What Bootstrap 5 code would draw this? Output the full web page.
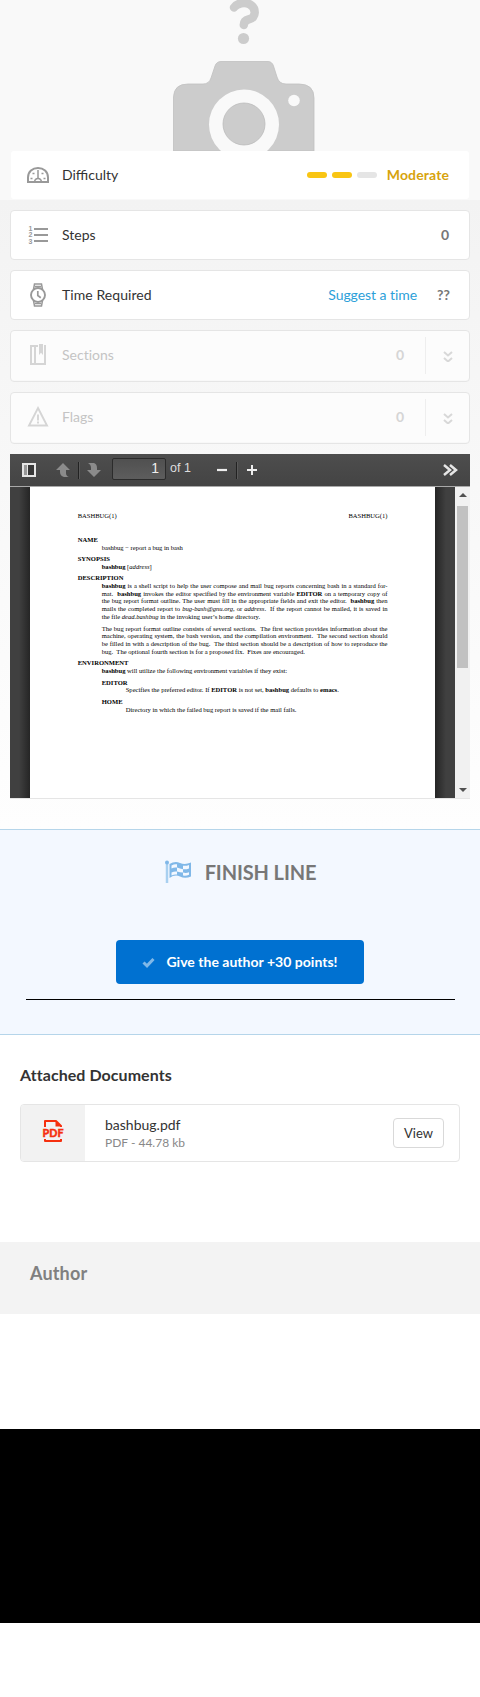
<!DOCTYPE html>
<html lang="en">
<head>
<meta charset="utf-8">
<meta name="viewport" content="width=device-width, initial-scale=1">
<title>Bashbug guide</title>
<link href="https://cdn.jsdelivr.net/npm/bootstrap@5.3.0/dist/css/bootstrap.min.css" rel="stylesheet">
<style>
body{font-family:Lato,"Liberation Sans",sans-serif;font-size:14px;line-height:20px;color:#333;background:#fff}
svg{display:block;flex:none}
.hero{height:200px;background:#f9f9f9;padding:0 11px}
.hero-art{height:151px}
.level-box{height:48px;background:#fff;border-radius:3px;padding:0 20px 0 15px}
.pill{width:20px;height:6px;border-radius:3px;background:#e5e5e5}
.pill.on{background:#f9c513}
.level{color:#d7a30d;letter-spacing:.12px}
.overview{height:629px;background:linear-gradient(#f3f3f3,#fefefe);padding:10px 10px 0}
.info-box{height:50px;border:1px solid #e5e5e5;border-radius:4px;background:#fff;padding:0 20px 0 15px;margin-bottom:10px;font-variant-ligatures:none}
.info-box.off{height:52px;background:#fcfcfc;padding:0 14px 2px 15px;color:#c4c4c4;box-shadow:inset 0 -1px 0 #f8f8f8}
.ic{width:24px;height:24px;margin-right:12px;color:#999}
.off .ic,.off .num{color:#d5d5d5}
.num{color:#777;font-weight:700}
.split{width:1px;height:37px;background:#eee;margin:0 15px 0 21px}
.suggest{color:#2b9fd9;letter-spacing:-.05px}
.viewer{height:345px;border-bottom:1px solid #e5e5e5}
.toolbar-dark{height:32px;background:linear-gradient(#4d4d4d,#444);padding:0 12px;font:14px/20px "Liberation Sans",sans-serif;color:#ddd}
.bar{width:1px;height:17px;background:#222;box-shadow:1px 0 0 #5a5a5a}
.pagebox{width:54px;height:22px;border:1px solid #2b2b2b;border-radius:2px;background:linear-gradient(#505050,#5d5d5d);text-align:right;padding-right:6px;color:#eee;line-height:19px;margin-bottom:2px}
.stage{height:312px;background:#3d3d3d;border-top:1px solid #a9a9a9}
.edge-l{width:20px;background:linear-gradient(90deg,#404040 45%,#252525)}
.edge-r{width:20px;background:linear-gradient(270deg,#404040 45%,#252525)}
.sheet{width:405px;background:#fff;padding:24.6px 47.5px 0 47.7px;font:6.58px/7.8px "Liberation Serif",serif;color:#000;overflow:hidden}
.ln{height:7.8px;white-space:nowrap;margin-left:24px}
.ln.j{text-align:justify;text-align-last:justify;white-space:normal}
.sec{height:7.8px;font-weight:700;margin-top:3.4px}
.gap{margin-top:3.9px}
.scroller{width:15px;background:#f1f1f1;padding:6px 2px 6px}
.thumb{width:11px;height:162px;background:#c1c1c1;margin-top:9px}
.finish{height:206px;background:#f3f8ff;border-top:1px solid #b5d5ea;border-bottom:1px solid #b5d5ea;padding:30px 25px 0 26px}
.finish-title{font-size:20px;line-height:24px;font-weight:700;color:#777}
.btn-points{width:248px;height:44px;background:#0071d1;color:#fff;border:0;border-radius:4px;font-size:14px;font-weight:700;margin:56px 1px 0 0;letter-spacing:.02px}
.btn-points span{margin-bottom:2px}
.rule{height:1px;background:#000;margin-top:15px}
.docs{height:207px;padding:30px 20px 0}
.docs h2{font-size:16px;line-height:20px;font-weight:700;color:#333;margin:0 0 19px;letter-spacing:.06px}
.doc{height:58px;border:1px solid #e5e5e5;border-radius:4px;overflow:hidden}
.thumb-pdf{width:64px;background:#f2f2f2}
.doc small{font-size:12px;line-height:17px;color:#888}
.btn-view{width:51px;height:30px;border:1px solid #d9d9d9;border-radius:4px;font-size:13px;padding:1px 0 0;color:#333;margin-right:15px}
.author{height:72px;background:#f3f3f3;padding:19px 30px;font-size:18px;line-height:24px;font-weight:700;color:#808080;letter-spacing:.15px}
.black-foot{height:194px;background:#000;margin-top:115px}
</style>
</head>
<body>
<header class="hero">
  <div class="hero-art d-flex justify-content-center">
    <svg width="200" height="151" viewBox="0 0 200 151">
      <path d="M94 7.500C97 3 105 1.800 110 4.500C116 8 117 18 108.500 19.500Q104 20.500 103.800 25" fill="none" stroke="#ccc" stroke-width="8.500" stroke-linecap="round"/>
      <circle cx="103.500" cy="38.500" r="5.600" fill="#ccc"/>
      <path d="M33.500 151V97Q34 84 48 84H63Q69 84 71 78L75 66Q76.500 61.500 81 61.500H128Q132 61.500 133.500 66L137 77Q139 84 146 84H159Q174 84 174 98V151Z" fill="#ccc" stroke="#c0c0c0" stroke-width=".8"/>
      <circle cx="104" cy="124.500" r="35" fill="#f9f9f9"/>
      <circle cx="104" cy="124" r="21" fill="#ccc" stroke="#bbb" stroke-width=".8"/>
      <circle cx="154" cy="100.500" r="5.800" fill="#f9f9f9"/>
    </svg>
  </div>
  <div class="level-box d-flex align-items-center">
    <svg class="ic" viewBox="0 0 24 24" fill="none" stroke="currentColor" stroke-width="2"><path d="M2 19V14.500C2 8.500 6.500 5 12 5S22 8.500 22 14.500V19Z"/><path d="M12 9v7" stroke-width="1.500"/><path d="M8.500 19Q9 15.500 12 15.500T15.500 19" stroke-width="1.500"/><path d="M4.500 15.500h2M17.500 15.500h2M6.500 10.500h2M15.500 10.500h2M11 8h2" stroke-width="1.700"/></svg>
    <span>Difficulty</span>
    <div class="d-flex ms-auto align-items-center" style="gap:5px"><i class="pill on"></i><i class="pill on"></i><i class="pill"></i></div>
    <b class="level" style="margin-left:10px">Moderate</b>
  </div>
</header>

<main>
<section class="overview">
  <div class="info-box d-flex align-items-center">
    <svg class="ic" viewBox="0 0 24 24"><g fill="none" stroke="currentColor" stroke-width="2"><path d="M8 6h14M8 12h14M8 18h14"/></g><g fill="currentColor" font-family="Liberation Sans" font-size="7" font-weight="700"><text x="2.500" y="7.500">1</text><text x="2.500" y="14.300">2</text><text x="2.500" y="21.300">3</text></g></svg>
    <span>Steps</span><span class="num ms-auto">0</span>
  </div>
  <div class="info-box d-flex align-items-center" style="padding-right:19px">
    <svg class="ic" viewBox="0 0 24 24" fill="none" stroke="currentColor" stroke-width="1.900"><circle cx="12" cy="12" r="7"/><path d="M7.500 6.500L8.500 1H15.500L16.500 6.500M7.500 17.500L8.500 23H15.500L16.500 17.500M9 3.500h6M9 20.500h6" stroke-width="1.500"/><path d="M11.800 8v4.500l3 2.200" stroke-width="1.700"/></svg>
    <span style="letter-spacing:.07px">Time Required</span><span class="suggest ms-auto">Suggest a time</span><span class="num" style="margin-left:20px">??</span>
  </div>
  <div class="info-box off d-flex align-items-center">
    <svg class="ic" viewBox="0 0 24 24" fill="none" stroke="currentColor" stroke-width="2"><path d="M12 3H5V21H19V3H18M9 3V21"/><path d="M13 1h4v11l-2-2.200L13 12z" fill="currentColor" stroke="none"/></svg>
    <span>Sections</span><span class="num ms-auto">0</span><i class="split"></i>
    <svg width="14" height="14" viewBox="0 0 14 14" fill="none" stroke="#d8d8d8" stroke-width="2"><path d="M3 4l4 3.500L11 4M3 10l4 3.500L11 10"/></svg>
  </div>
  <div class="info-box off d-flex align-items-center">
    <svg class="ic" viewBox="0 0 24 24" fill="none" stroke="currentColor" stroke-width="1.900"><path d="M12 3L21 20.500H3Z"/><path d="M12 9.500v6M12 16.500v2"/></svg>
    <span>Flags</span><span class="num ms-auto">0</span><i class="split"></i>
    <svg width="14" height="14" viewBox="0 0 14 14" fill="none" stroke="#d8d8d8" stroke-width="2"><path d="M3 4l4 3.500L11 4M3 10l4 3.500L11 10"/></svg>
  </div>

  <div class="viewer">
    <div class="toolbar-dark d-flex align-items-center">
      <svg width="14" height="14" viewBox="0 0 14 14"><path d="M0 0h14v14H0z" fill="#e6e6e6"/><path d="M2 2h3v10H2z" fill="#999"/><path d="M6 2h6v10H6z" fill="#383838"/></svg>
      <svg width="14" height="14" viewBox="0 0 14 14" style="margin-left:20px" fill="#8b8b8b"><path d="M7 0L14 7H10V10Q10 13 13 14H8Q4 13 4 9V7H0Z"/></svg>
      <i class="bar" style="margin:0 8px 0 8px"></i>
      <svg width="14" height="14" viewBox="0 0 14 14" fill="#8b8b8b"><path d="M7 14L0 7H4V5Q4 1.500 1 0H7Q10 1 10 5V7H14Z"/></svg>
      <div class="pagebox" style="margin-left:11px">1</div>
      <span class="mb-1" style="margin-left:4px;font-size:12.500px">of 1</span>
      <svg width="12" height="12" viewBox="0 0 12 12" style="margin-left:25px"><path d="M1 6h10" stroke="#eee" stroke-width="2.200"/></svg>
      <i class="bar" style="margin:0 9px 0 8px"></i>
      <svg width="12" height="12" viewBox="0 0 12 12"><path d="M1 6h10M6 1v10" stroke="#eee" stroke-width="2"/></svg>
      <svg class="ms-auto" width="15" height="12" viewBox="0 0 15 12" fill="none" stroke="#e6e6e6" stroke-width="2.500"><path d="M1 1l6 5-6 5M7 1l6 5-6 5"/></svg>
    </div>
    <div class="stage d-flex">
      <div class="edge-l"></div>
      <article class="sheet">
        <div class="d-flex justify-content-between" style="margin-bottom:16.600px"><span>BASHBUG(1)</span><span>BASHBUG(1)</span></div>
        <div class="sec">NAME</div>
        <div class="ln">bashbug − report a bug in bash</div>
        <div class="sec">SYNOPSIS</div>
        <div class="ln"><b>bashbug</b> [<i>address</i>]</div>
        <div class="sec">DESCRIPTION</div>
        <div class="ln j"><b>bashbug</b> is a shell script to help the user compose and mail bug reports concerning bash in a standard for-</div>
        <div class="ln j">mat.&nbsp; <b>bashbug</b> invokes the editor specified by the environment variable <b>EDITOR</b> on a temporary copy of</div>
        <div class="ln j">the bug report format outline. The user must fill in the appropriate fields and exit the editor.&nbsp; <b>bashbug</b> then</div>
        <div class="ln j">mails the completed report to <i>bug-bash@gnu.org</i>, or <i>address</i>.&nbsp; If the report cannot be mailed, it is saved in</div>
        <div class="ln">the file <i>dead.bashbug</i> in the invoking user’s home directory.</div>
        <div class="ln j gap">The bug report format outline consists of several sections.&nbsp; The first section provides information about the</div>
        <div class="ln j">machine, operating system, the bash version, and the compilation environment.&nbsp; The second section should</div>
        <div class="ln j">be filled in with a description of the bug.&nbsp; The third section should be a description of how to reproduce the</div>
        <div class="ln">bug.&nbsp; The optional fourth section is for a proposed fix.&nbsp; Fixes are encouraged.</div>
        <div class="sec">ENVIRONMENT</div>
        <div class="ln"><b>bashbug</b> will utilize the following environment variables if they exist:</div>
        <div class="ln gap"><b>EDITOR</b></div>
        <div class="ln ps-4">Specifies the preferred editor. If <b>EDITOR</b> is not set, <b>bashbug</b> defaults to <b>emacs</b>.</div>
        <div class="ln gap"><b>HOME</b></div>
        <div class="ln ps-4">Directory in which the failed bug report is saved if the mail fails.</div>
      </article>
      <div class="edge-r"></div>
      <div class="scroller d-flex flex-column align-items-center">
        <svg width="8" height="4" viewBox="0 0 8 4"><path d="M4 0l4 4H0z" fill="#505050"/></svg>
        <div class="thumb"></div>
        <svg class="mt-auto" width="8" height="4" viewBox="0 0 8 4"><path d="M4 4L0 0h8z" fill="#505050"/></svg>
      </div>
    </div>
  </div>
</section>

<section class="finish text-center">
  <div class="finish-title d-flex align-items-center justify-content-center">
    <svg width="26" height="24" viewBox="0 0 26 24" style="margin-right:14px"><path d="M2 2V23" stroke="#a8d0f0" stroke-width="2.500"/><circle cx="2" cy="2.500" r="2" fill="#80b8e8"/><path d="M4.500 4Q10 .8 15 3T26 2.500V16.500Q20 19 15 16.500T4.500 18Z" fill="#80b8e8"/><g fill="#f3f8ff"><path d="M6.500 5.500Q9.500 3.800 12 4.300V7.500Q9 7 6.500 8.500ZM18 5.700Q21 6.200 24 5V8.500Q21 9.700 18 9.200ZM12 7.500Q15 8.800 18 9.200V12.500Q15 12.500 12 11.500ZM6.500 12.500Q9.500 11 12 11.500V14.500Q9.500 14 6.500 15.500ZM18 12.500Q21 13.500 24 12.200V14.800Q21 16 18 15.500Z"/></g></svg>
    <span style="letter-spacing:-.12px">FINISH LINE</span>
  </div>
  <button class="btn btn-points d-inline-flex align-items-center justify-content-center p-0"><svg width="13" height="11" viewBox="0 0 13 11" style="margin-right:11px"><path d="M1.500 5.500L5 8.800L11.500 2" fill="none" stroke="#80b8e8" stroke-width="3"/></svg><span>Give the author +30 points!</span></button>
  <div class="rule"></div>
</section>

<section class="docs">
  <h2>Attached Documents</h2>
  <div class="doc d-flex align-items-center">
    <div class="thumb-pdf h-100 d-flex align-items-center justify-content-center">
      <svg width="24" height="24" viewBox="0 0 24 24" style="margin-bottom:4px"><path d="M4 8V2H15L20 7V8M4 20V22H20V20" fill="none" stroke="#f5300f" stroke-width="2" stroke-linejoin="round"/><path d="M14.500 1.500V7.500H20.500Z" fill="#f5300f"/><text x="1.500" y="17.800" textLength="21" lengthAdjust="spacingAndGlyphs" font-family="Lato" font-weight="900" font-size="11" fill="#f5300f" stroke="#f5300f" stroke-width=".4">PDF</text></svg>
    </div>
    <div class="d-flex flex-column" style="margin-left:20px"><span style="line-height:18px">bashbug.pdf</span><small>PDF - 44.78 kb</small></div>
    <button class="btn btn-view ms-auto">View</button>
  </div>
</section>
<section class="author">Author</section>
</main>
<footer class="black-foot"></footer>
<script src="https://cdn.jsdelivr.net/npm/bootstrap@5.3.0/dist/js/bootstrap.bundle.min.js"></script>
</body>
</html>
